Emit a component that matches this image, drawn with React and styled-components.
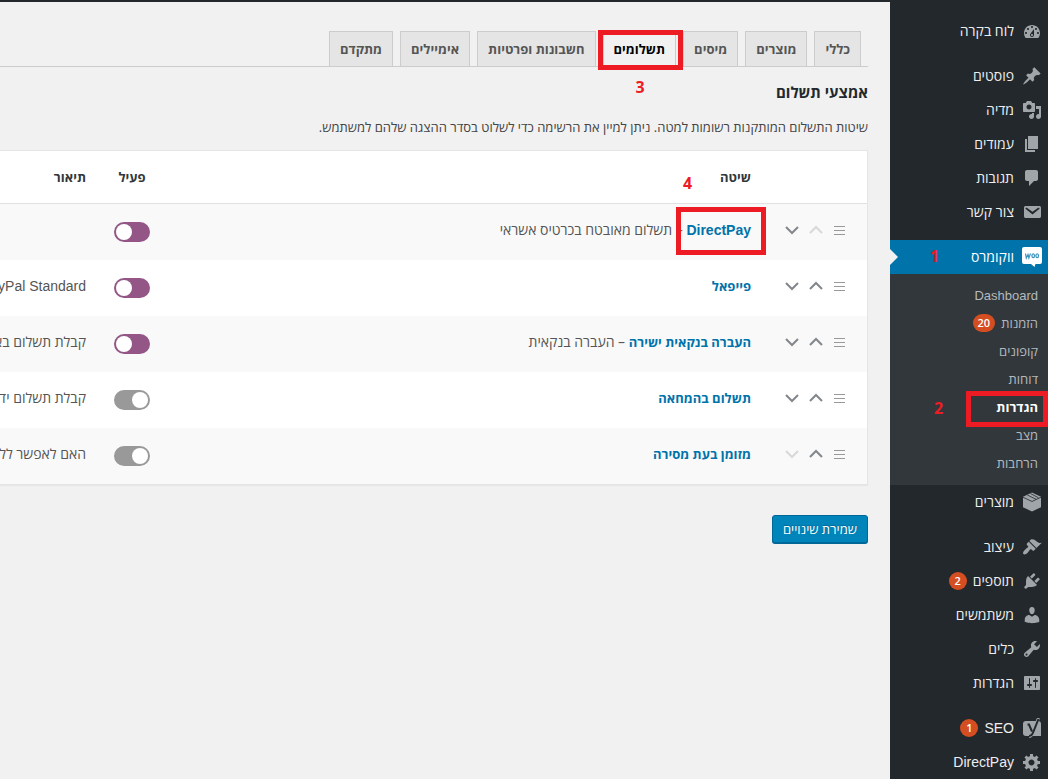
import { useState } from "react"
import styled, { createGlobalStyle } from "styled-components"

const icons = {
  dashboard: "M3.76 17h12.48C17.34 15.63 18 13.89 18 12c0-4.42-3.58-8-8-8s-8 3.58-8 8c0 1.89.66 3.63 1.76 5zM10 5c.55 0 1 .45 1 1s-.45 1-1 1-1-.45-1-1 .45-1 1-1zM6 7c.55 0 1 .45 1 1s-.45 1-1 1-1-.45-1-1 .45-1 1-1zm8 0c.55 0 1 .45 1 1s-.45 1-1 1-1-.45-1-1 .45-1 1-1zm-5.37 5.55L12 8v6c0 1.1-.9 2-2 2s-2-.9-2-2c0-.57.24-1.08.63-1.45zM4 11c.55 0 1 .45 1 1s-.45 1-1 1-1-.45-1-1 .45-1 1-1zm12 0c.55 0 1 .45 1 1s-.45 1-1 1-1-.45-1-1 .45-1 1-1zm-5 3c0-.55-.45-1-1-1s-1 .45-1 1 .45 1 1 1 1-.45 1-1z",
  posts: "M10.44 3.02l1.82-1.82 6.36 6.35-1.83 1.82c-1.05-.68-2.48-.57-3.41.36l-.75.75c-.92.93-1.04 2.35-.35 3.41l-1.83 1.82-2.41-2.41-2.8 2.79c-.42.42-3.38 2.71-3.8 2.29s1.86-3.39 2.28-3.81l2.79-2.79L4.1 9.36l1.83-1.82c1.05.69 2.48.57 3.4-.36l.75-.75c.93-.92 1.05-2.35.36-3.41z",
  media: "M13 11V4c0-.55-.45-1-1-1h-1.67L9 1H5L3.67 3H2c-.55 0-1 .45-1 1v7c0 .55.45 1 1 1h10c.55 0 1-.45 1-1zM7 4.5c1.38 0 2.5 1.12 2.5 2.5S8.38 9.5 7 9.5 4.5 8.38 4.5 7 5.62 4.5 7 4.5zM14 6h5v10.5c0 1.38-1.12 2.5-2.5 2.5S14 17.88 14 16.5s1.12-2.5 2.5-2.5c.17 0 .34.02.5.05V9h-3V6zm-4 8.05V13h2v3.5c0 1.38-1.12 2.5-2.5 2.5S7 17.88 7 16.5 8.12 14 9.5 14c.17 0 .34.02.5.05z",
  pages: "M6 15V2h10v13H6zm-1 1h8v2H3V5h2v11z",
  comments: "M5 2h9c1.1 0 2 .9 2 2v7c0 1.1-.9 2-2 2h-2l-5 5v-5H5c-1.1 0-2-.9-2-2V4c0-1.1.9-2 2-2z",
  email: "M3.87 4h13.25C18.37 4 19 4.59 19 5.79v8.42c0 1.19-.63 1.79-1.88 1.79H3.87c-1.25 0-1.88-.6-1.88-1.79V5.79c0-1.2.63-1.79 1.88-1.79zm6.62 8.6l6.74-5.53c.24-.2.43-.66.13-1.07-.29-.41-.82-.42-1.17-.17l-5.7 3.86L4.8 5.83c-.35-.25-.88-.24-1.17.17-.3.41-.11.87.13 1.07z",
  appearance: "M14.48 11.06L7.41 3.99l1.5-1.5c.5-.56 2.3-.47 3.51.32 1.21.8 1.43 1.28 2.91 2.1 1.18.64 2.45 1.26 4.45.85zm-.71.71L6.7 4.7 4.93 6.47c-.39.39-.39 1.02 0 1.41l1.06 1.06c.39.39.39 1.03 0 1.42-.6.6-1.43 1.11-2.21 1.69-.35.26-.7.53-1.01.84C1.43 14.23.4 16.08 1.4 17.07c.99 1 2.84-.03 4.18-1.36.31-.31.58-.66.85-1.02.57-.78 1.08-1.61 1.69-2.21.39-.39 1.02-.39 1.41 0l1.06 1.06c.39.39 1.02.39 1.41 0z",
  plugins: "M13.11 4.36L9.87 7.6 8 5.73l3.24-3.24c.35-.34 1.05-.2 1.56.32.52.51.66 1.21.31 1.55zm-8 1.77l.91-1.12 9.01 9.01-1.19.84c-.71.71-2.63 1.16-3.82 1.16H6.14L4.9 17.26c-.59.59-1.54.59-2.12 0-.59-.58-.59-1.53 0-2.12l1.24-1.24v-3.88c0-1.13.4-3.19 1.09-3.89zm7.26 3.97l3.24-3.24c.34-.35 1.04-.21 1.55.31.52.51.66 1.21.31 1.55l-3.24 3.25z",
  users: "M10 9.25c-2.27 0-2.73-3.44-2.73-3.44C7 4.02 7.82 2 9.97 2c2.16 0 2.98 2.02 2.71 3.81 0 0-.41 3.44-2.68 3.44zm0 2.57L12.72 10c2.39 0 4.52 2.33 4.52 4.53v2.49s-3.65 1.13-7.24 1.13c-3.65 0-7.24-1.13-7.24-1.13v-2.49c0-2.25 1.94-4.48 4.47-4.48z",
  tools: "M16.68 9.77c-1.34 1.34-3.3 1.67-4.95.99l-5.41 6.52c-.99.99-2.59.99-3.58 0s-.99-2.59 0-3.57l6.52-5.42c-.68-1.65-.35-3.61.99-4.95 1.28-1.28 3.12-1.62 4.72-1.06l-2.89 2.89 2.82 2.82 2.86-2.87c.53 1.58.18 3.39-1.08 4.65zM3.81 16.21c.4.39 1.04.39 1.43 0 .4-.4.4-1.04 0-1.43-.39-.4-1.03-.4-1.43 0-.39.39-.39 1.03 0 1.43z",
  settings: "M18 16V4c0-.55-.45-1-1-1H3c-.55 0-1 .45-1 1v12c0 .55.45 1 1 1h14c.55 0 1-.45 1-1zM8 11h1c.55 0 1 .45 1 1s-.45 1-1 1H8v1.5c0 .28-.22.5-.5.5s-.5-.22-.5-.5V13H6c-.55 0-1-.45-1-1s.45-1 1-1h1V5.5c0-.28.22-.5.5-.5s.5.22.5.5V11zm5-2h-1c-.55 0-1-.45-1-1s.45-1 1-1h1V5.5c0-.28.22-.5.5-.5s.5.22.5.5V7h1c.55 0 1 .45 1 1s-.45 1-1 1h-1v5.5c0 .28-.22.5-.5.5s-.5-.22-.5-.5V9z",
  generic: "M18 12h-2.18c-.17.7-.44 1.35-.81 1.93l1.54 1.54-2.1 2.1-1.54-1.54c-.58.36-1.23.63-1.91.79V19H8v-2.18c-.68-.16-1.33-.43-1.91-.79l-1.54 1.54-2.12-2.12 1.54-1.54c-.36-.58-.63-1.23-.79-1.91H1V9.03h2.17c.16-.7.44-1.35.8-1.94L2.43 5.55l2.1-2.1 1.54 1.54c.58-.37 1.24-.64 1.93-.81V2h3v2.18c.68.16 1.33.43 1.91.79l1.54-1.54 2.12 2.12-1.54 1.54c.36.59.64 1.24.8 1.94H18V12zm-8.5 1.5c1.66 0 3-1.34 3-3s-1.34-3-3-3-3 1.34-3 3 1.34 3 3 3z",
}

const menuGroups = [
  [{ icon: "dashboard", label: "לוח בקרה" }],
  [
    { icon: "posts", label: "פוסטים" },
    { icon: "media", label: "מדיה" },
    { icon: "pages", label: "עמודים" },
    { icon: "comments", label: "תגובות" },
    { icon: "email", label: "צור קשר" },
  ],
  [
    { icon: "woo", label: "ווקומרס", current: true, step: "1" },
    { icon: "products", label: "מוצרים" },
  ],
  [
    { icon: "appearance", label: "עיצוב" },
    { icon: "plugins", label: "תוספים", count: 2 },
    { icon: "users", label: "משתמשים" },
    { icon: "tools", label: "כלים" },
    { icon: "settings", label: "הגדרות" },
  ],
  [
    { icon: "yoast", label: "SEO", latin: true, count: 1 },
    { icon: "generic", label: "DirectPay", latin: true },
  ],
]

const submenu = [
  { label: "Dashboard", latin: true },
  { label: "הזמנות", count: 20 },
  { label: "קופונים" },
  { label: "דוחות" },
  { label: "הגדרות", current: true },
  { label: "מצב" },
  { label: "הרחבות" },
]

const tabs = ["כללי", "מוצרים", "מיסים", "תשלומים", "חשבונות ופרטיות", "אימיילים", "מתקדם"]

const gateways = [
  { id: "directpay", name: "DirectPay", latin: true, title: "תשלום מאובטח בכרטיס אשראי", enabled: true, description: "" },
  { id: "paypal", name: "פייפאל", enabled: true, description: "PayPal Standard", latinDescription: true },
  { id: "bacs", name: "העברה בנקאית ישירה", title: "העברה בנקאית", enabled: true, description: "קבלת תשלום באמצעות" },
  { id: "cheque", name: "תשלום בהמחאה", enabled: false, description: "קבלת תשלום ידני" },
  { id: "cod", name: "מזומן בעת מסירה", enabled: false, description: "האם לאפשר ללקוחות" },
]

function MenuIcon({ name }) {
  if (name === "woo") {
    return (
      <Icon viewBox="0 0 20 20">
        <path fill="#fff" d="M2 0h16a2 2 0 0 1 2 2v13a2 2 0 0 1-2 2h-4.500l-1 3L9 17H2a2 2 0 0 1-2-2V2a2 2 0 0 1 2-2z" />
        <g fill="none" stroke="#3b93bf" strokeWidth="1.200">
          <path d="M3.500 6.500l.8 4.500 1.700-3.500.9 3.500 1.600-4.500" />
          <ellipse cx="11.200" cy="8.800" rx="1.300" ry="1.900" />
          <ellipse cx="15.200" cy="8.800" rx="1.300" ry="1.900" />
        </g>
      </Icon>
    )
  }
  if (name === "products") {
    return (
      <Icon viewBox="0 0 20 20">
        <path d="M10 .5l9 4.300v10.400l-9 4.300-9-4.300V4.800z" />
        <path fill="none" stroke="#23282d" strokeWidth=".8" d="M1 5.200l9 4.300 9-4.300M5.300 3l9 4.400M8.500 1.500l8 4.300" />
      </Icon>
    )
  }
  if (name === "yoast") {
    return (
      <Icon viewBox="0 0 20 20">
        <path d="M4 3h12a3 3 0 0 1 3 3v12H4a3 3 0 0 1-3-3V6a3 3 0 0 1 3-3z" />
        <path fill="none" stroke="#a0a5aa" strokeWidth="3" d="M16.500 0l-5 13.500q-1.500 4.500-4.500 5" />
        <path fill="none" stroke="#23282d" strokeWidth="2" d="M5.500 6.500h1.500l3 7M16.500 1l-5 12.500q-1.500 4.500-4.500 4.500" />
      </Icon>
    )
  }
  return <Icon viewBox="0 0 20 20"><path d={icons[name]} /></Icon>
}

function MenuItem({ item }) {
  return (
    <li>
      <MenuLink href="#" $current={item.current}>
        <MenuIcon name={item.icon} />
        {item.latin ? <Latin>{item.label}</Latin> : <MenuLabel>{item.label}</MenuLabel>}
        {item.count && <Count>{item.count}</Count>}
        {item.step && <Step $top={4} $left={40}>{item.step}</Step>}
      </MenuLink>
      {item.current && (
        <Submenu>
          {submenu.map((s) => (
            <li key={s.label}>
              <SubmenuLink href="#" $current={s.current}>
                {s.latin ? <Latin>{s.label}</Latin> : <span>{s.label}</span>}
                {s.count && <Count>{s.count}</Count>}
                {s.current && <MenuMark />}
                {s.current && <Step $top={3} $left={44}>2</Step>}
              </SubmenuLink>
            </li>
          ))}
        </Submenu>
      )}
    </li>
  )
}

function Gateway({ gateway, first, last, onToggle }) {
  return (
    <tr>
      <td>
        <SortButtons>
          <SortButton type="button" aria-label="גרירה">
            <svg width="12" height="12" viewBox="0 0 12 12"><path d="M0 2.500h11M0 6.500h11M0 10.500h11" /></svg>
          </SortButton>
          <SortButton type="button" aria-label="למעלה" disabled={first} $arrow>
            <svg width="14" height="10" viewBox="0 0 14 10"><path d="M1 8l6-6 6 6" /></svg>
          </SortButton>
          <SortButton type="button" aria-label="למטה" disabled={last} $arrow>
            <svg width="14" height="10" viewBox="0 0 14 10"><path d="M1 2l6 6 6-6" /></svg>
          </SortButton>
        </SortButtons>
      </td>
      <td>
        <GatewayLink href="#" $latin={gateway.latin}>
          {gateway.latin ? <Latin>{gateway.name}</Latin> : gateway.name}
          {first && <GatewayMark />}
        </GatewayLink>
        {gateway.title && <span>&nbsp;– {gateway.title}</span>}
      </td>
      <td>
        <Toggle
          type="checkbox"
          aria-label={gateway.name}
          checked={gateway.enabled}
          onChange={() => onToggle(gateway.id)}
        />
      </td>
      <td>{gateway.latinDescription ? <Latin>{gateway.description}</Latin> : gateway.description}</td>
    </tr>
  )
}

export default function App() {
  const [methods, setMethods] = useState(gateways)
  const [tab, setTab] = useState("תשלומים")

  function toggleMethod(id) {
    setMethods(methods.map((m) => (m.id === id ? { ...m, enabled: !m.enabled } : m)))
  }

  return (
    <Page dir="rtl" lang="he">
      <GlobalStyle />
      <Sidebar>
        {menuGroups.map((group, i) => (
          <MenuGroup key={i}>
            {group.map((item) => <MenuItem key={item.icon} item={item} />)}
          </MenuGroup>
        ))}
      </Sidebar>

      <Content>
        <Tabs>
          {tabs.map((t) => (
            <Tab key={t} href="#" $active={t === tab} onClick={() => setTab(t)}>
              {t}
              {t === "תשלומים" && <TabMark />}
              {t === "תשלומים" && <Step $top={43} $left={32}>3</Step>}
            </Tab>
          ))}
        </Tabs>

        <Title>אמצעי תשלום</Title>
        <Intro>שיטות התשלום המותקנות רשומות למטה. ניתן למיין את הרשימה כדי לשלוט בסדר ההצגה שלהם למשתמש.</Intro>

        <Table>
          <colgroup>
            <col width="104" />
            <col />
            <col width="68" />
            <col width="400" />
          </colgroup>
          <thead>
            <tr>
              <th></th>
              <th>
                <Heading>
                  שיטה
                  <Step $top={3} $left={-37}>4</Step>
                </Heading>
              </th>
              <th>פעיל</th>
              <th>תיאור</th>
            </tr>
          </thead>
          <tbody>
            {methods.map((m, i) => (
              <Gateway
                key={m.id}
                gateway={m}
                first={i === 0}
                last={i === methods.length - 1}
                onToggle={toggleMethod}
              />
            ))}
          </tbody>
        </Table>

        <SaveButton type="button">שמירת שינויים</SaveButton>
      </Content>
    </Page>
  )
}

const GlobalStyle = createGlobalStyle`
  * {
    box-sizing: border-box;
  }
  body {
    margin: 0;
    background: #f1f1f1;
    color: #444;
    font-family: "Open Sans", "Liberation Sans", sans-serif;
    font-size: 13px;
  }
  ul {
    list-style: none;
    margin: 0;
    padding: 0;
  }
  a {
    text-decoration: none;
  }
`
const Page = styled.div`
  display: flex;
  min-height: 100vh;
  border-top: 2px solid #23282d;
  overflow: hidden;
`
const Latin = styled.span`
  font-family: "Liberation Sans", Arial, sans-serif;
`
const Sidebar = styled.nav`
  width: 158px;
  flex-shrink: 0;
  padding-top: 12px;
  background: #23282d;
`
const MenuGroup = styled.ul`
  & + & {
    margin-top: 11px;
  }
`
const MenuLink = styled.a`
  position: relative;
  display: flex;
  align-items: center;
  height: 34px;
  padding-right: 6px;
  font-size: 14px;
  color: ${(props) => (props.$current ? "#fff" : "#eee")};
  background: ${(props) => (props.$current ? "#0073aa" : "transparent")};

  &::after {
    content: "";
    display: ${(props) => (props.$current ? "block" : "none")};
    position: absolute;
    left: 0;
    top: 9px;
    border: 8px solid transparent;
    border-left-color: #f1f1f1;
    border-right-width: 0;
  }
`
const MenuLabel = styled.span`
  padding-bottom: 1px;
`
const Icon = styled.svg`
  width: 20px;
  height: 20px;
  margin-left: 8px;
  flex-shrink: 0;
  fill: #a0a5aa;
`
const Submenu = styled.ul`
  padding: 7px 0 8px;
  background: #32373c;
`
const SubmenuLink = styled.a`
  position: relative;
  display: flex;
  align-items: center;
  height: 28px;
  padding-right: 10px;
  font-size: 13px;
  font-weight: ${(props) => (props.$current ? 700 : 400)};
  color: ${(props) => (props.$current ? "#fff" : "#b4b9be")};
`
const Count = styled.span`
  min-width: 18px;
  height: 18px;
  margin-right: 6px;
  padding: 0 5px;
  border-radius: 9px;
  background: #d54e21;
  color: #fff;
  font-size: 11px;
  font-weight: 600;
  line-height: 18px;
  text-align: center;
`
const Content = styled.main`
  flex: 1;
  min-width: 0;
  padding: 29px 22px 0 0;
`
const Tabs = styled.nav`
  display: flex;
  gap: 7px;
  padding-right: 7px;
  border-bottom: 1px solid #ccc;
`
const Tab = styled.a`
  position: relative;
  height: 36px;
  margin-bottom: -1px;
  padding: 0 10px;
  border: 1px solid #ccc;
  border-bottom-color: ${(props) => (props.$active ? "#f1f1f1" : "#ccc")};
  background: ${(props) => (props.$active ? "#f1f1f1" : "#e5e5e5")};
  color: ${(props) => (props.$active ? "#000" : "#555")};
  font-size: 13px;
  font-weight: 700;
  line-height: 34px;
  white-space: nowrap;
`
const Title = styled.h2`
  margin: 14px 0;
  color: #23282d;
  font-size: 15px;
  font-weight: 700;
  line-height: 22px;
`
const Intro = styled.p`
  margin: 0 0 13px;
  line-height: 20px;
`
/* wider than the content, the description column runs out of the window */
const Table = styled.table`
  width: calc(100% + 303px);
  table-layout: fixed;
  border-spacing: 0;
  border: 1px solid #e5e5e5;
  background: #fff;
  box-shadow: 0 1px 1px rgba(0, 0, 0, 0.04);
  color: #555;
  font-size: 14px;

  th, td {
    height: 56px;
    padding: 0 12px 6px;
    text-align: right;
    white-space: nowrap;
  }
  th {
    height: 53px;
    padding-bottom: 0;
    border-bottom: 1px solid #e1e1e1;
    color: #32373c;
    font-size: 13px;
    font-weight: 700;
  }
  th:nth-child(3), td:nth-child(3) {
    padding: 0;
    text-align: center;
  }
  td:first-child {
    padding: 0 15px 4px 0;
  }
  tbody tr:nth-child(odd) {
    background: #f9f9f9;
  }
`
const Heading = styled.span`
  position: relative;
`
const SortButtons = styled.div`
  display: flex;
`
const SortButton = styled.button`
  display: flex;
  align-items: center;
  justify-content: center;
  width: 24px;
  height: 24px;
  padding: 0;
  border: 0;
  background: none;

  path {
    fill: none;
    stroke: ${(props) => (props.disabled ? "#d8d8d8" : props.$arrow ? "#82878c" : "#999")};
    stroke-width: ${(props) => (props.$arrow ? 2 : 1)};
  }
`
const GatewayLink = styled.a`
  position: relative;
  color: #0073aa;
  font-size: ${(props) => (props.$latin ? 14 : 13)}px;
  font-weight: 700;
`
const Toggle = styled.input`
  appearance: none;
  display: block;
  width: 36px;
  height: 20px;
  margin: 0 auto;
  border: 2px solid ${(props) => (props.checked ? "#935687" : "#999")};
  border-radius: 10px;
  background: ${(props) => (props.checked ? "#935687" : "#999")};

  &::before {
    content: "";
    display: block;
    width: 16px;
    height: 16px;
    margin-right: ${(props) => (props.checked ? "16px" : "0")};
    border-radius: 50%;
    background: #fff;
  }
`
const SaveButton = styled.button`
  display: block;
  height: 28px;
  margin-top: 30px;
  padding: 0 10px;
  border: 1px solid #006799;
  border-radius: 3px;
  background: #0085ba;
  box-shadow: 0 1px 0 #006799;
  color: #fff;
  font-family: inherit;
  font-size: 13px;
  line-height: 26px;
  text-shadow: 0 -1px 1px #006799;
`
/* red walkthrough marks */
const Mark = styled.span`
  position: absolute;
  border: 5px solid #ed1c24;
  z-index: 1;
`
const TabMark = styled(Mark)`
  inset: -2px -8px -4px -6px;
`
const MenuMark = styled(Mark)`
  width: 82px;
  right: 0;
  top: -2px;
  bottom: -6px;
`
const GatewayMark = styled(Mark)`
  inset: -13px -15px -16px -10px;
`
const Step = styled.b`
  position: absolute;
  top: ${(props) => props.$top}px;
  left: ${(props) => props.$left}px;
  color: #ed1c24;
  font-size: 16px;
  font-weight: 700;
  line-height: 24px;
`
